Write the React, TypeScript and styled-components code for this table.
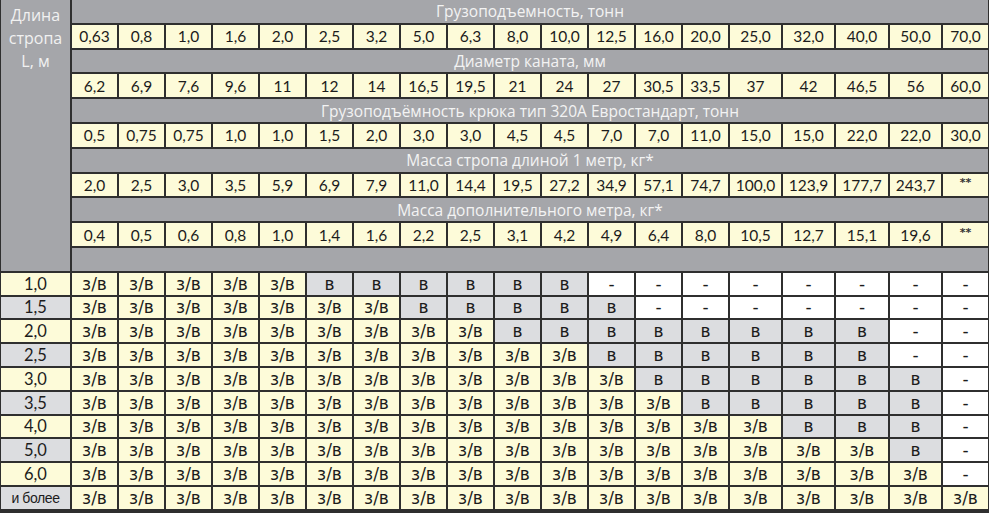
import styled, { createGlobalStyle } from "styled-components";

const GlobalStyle = createGlobalStyle`
  html, body {
    margin: 0;
    padding: 0;
    background: #2f2f2f;
  }
`;

type Tone = "yellow" | "gray" | "white";

const tones: Record<Tone, string> = {
  yellow: "#fdfbd9",
  gray: "#dcdde0",
  white: "#ffffff",
};

const Table = styled.div`
  width: 989px;
  height: 513px;
  box-sizing: border-box;
  display: grid;
  grid-template-columns: 69px repeat(14, 45px) 51px 51px 52px 51px 1fr;
  grid-template-rows: repeat(11, 22.8px) repeat(10, 21.8px);
  gap: 2px;
  padding: 0 1px 2px 1px;
  background: #2f2f2f;
`;

const LengthHeader = styled.div`
  grid-column: 1;
  grid-row: 1 / span 11;
  background: #a5a6aa;
  color: #f1f1f1;
  font-family: "Open Sans", "Liberation Sans", sans-serif;
  font-size: 16px;
  line-height: 23px;
  text-align: center;
  padding-top: 4px;
`;

const Band = styled.div`
  grid-column: 2 / -1;
  background: #a5a6aa;
  color: #f3f3f3;
  font-family: "Open Sans", "Liberation Sans", sans-serif;
  font-size: 15.5px;
  display: flex;
  align-items: center;
  justify-content: center;
`;

const Value = styled.div`
  background: ${tones.yellow};
  color: #1c1c1c;
  font-family: Lato, "Liberation Sans", sans-serif;
  font-size: 15.5px;
  display: flex;
  align-items: center;
  justify-content: center;
`;

const Stars = styled.span`
  font-family: "DejaVu Sans", sans-serif;
  font-size: 11px;
  font-weight: bold;
  color: #333;
  margin-top: -4px;
`;

const LengthCell = styled.div<{ $tone: Tone }>`
  background: ${(p) => tones[p.$tone]};
  color: #1c1c1c;
  font-family: Lato, "Liberation Sans", sans-serif;
  font-size: 16.5px;
  display: flex;
  align-items: center;
  justify-content: center;
`;

const MoreLabel = styled.span`
  font-family: "Liberation Sans Narrow", "Liberation Sans", sans-serif;
  font-size: 14px;
  letter-spacing: -0.4px;
`;

const Mark = styled.div<{ $tone: Tone }>`
  background: ${(p) => tones[p.$tone]};
  color: #1c1c1c;
  font-family: "DejaVu Sans", Verdana, sans-serif;
  font-size: 17px;
  display: flex;
  align-items: center;
  justify-content: center;
`;

const sections: { title: string; values: string[] }[] = [
  {
    title: "Грузоподъемность, тонн",
    values: ["0,63", "0,8", "1,0", "1,6", "2,0", "2,5", "3,2", "5,0", "6,3", "8,0", "10,0", "12,5", "16,0", "20,0", "25,0", "32,0", "40,0", "50,0", "70,0"],
  },
  {
    title: "Диаметр каната, мм",
    values: ["6,2", "6,9", "7,6", "9,6", "11", "12", "14", "16,5", "19,5", "21", "24", "27", "30,5", "33,5", "37", "42", "46,5", "56", "60,0"],
  },
  {
    title: "Грузоподъёмность крюка тип 320А Евростандарт, тонн",
    values: ["0,5", "0,75", "0,75", "1,0", "1,0", "1,5", "2,0", "3,0", "3,0", "4,5", "4,5", "7,0", "7,0", "11,0", "15,0", "15,0", "22,0", "22,0", "30,0"],
  },
  {
    title: "Масса стропа длиной 1 метр, кг*",
    values: ["2,0", "2,5", "3,0", "3,5", "5,9", "6,9", "7,9", "11,0", "14,4", "19,5", "27,2", "34,9", "57,1", "74,7", "100,0", "123,9", "177,7", "243,7", "**"],
  },
  {
    title: "Масса дополнительного метра, кг*",
    values: ["0,4", "0,5", "0,6", "0,8", "1,0", "1,4", "1,6", "2,2", "2,5", "3,1", "4,2", "4,9", "6,4", "8,0", "10,5", "12,7", "15,1", "19,6", "**"],
  },
];

// [length, count of "з/в", count of "в", count of "-"]
const lengths: [string, number, number, number][] = [
  ["1,0", 5, 6, 8],
  ["1,5", 7, 5, 7],
  ["2,0", 9, 8, 2],
  ["2,5", 11, 6, 2],
  ["3,0", 12, 6, 1],
  ["3,5", 13, 5, 1],
  ["4,0", 15, 3, 1],
  ["5,0", 17, 1, 1],
  ["6,0", 18, 0, 1],
  ["и более", 19, 0, 0],
];

const markCells = (zv: number, v: number, dash: number) => [
  ...Array(zv).fill({ text: "з/в", tone: "yellow" as Tone }),
  ...Array(v).fill({ text: "в", tone: "gray" as Tone }),
  ...Array(dash).fill({ text: "-", tone: "white" as Tone }),
];

const App = () => {
  return (
    <>
      <GlobalStyle />
      <Table>
        <LengthHeader>
          Длина
          <br />
          стропа
          <br />
          L, м
        </LengthHeader>
        {sections.map((s) => (
          <>
            <Band key={s.title}>{s.title}</Band>
            {s.values.map((v, i) => (
              <Value key={s.title + i}>{v === "**" ? <Stars>**</Stars> : v}</Value>
            ))}
          </>
        ))}
        <Band />
        {lengths.map(([len, zv, v, dash], r) => (
          <>
            <LengthCell key={len} $tone={r % 2 === 0 ? "yellow" : "gray"}>
              {len === "и более" ? <MoreLabel>{len}</MoreLabel> : len}
            </LengthCell>
            {markCells(zv, v, dash).map((c, i) => (
              <Mark key={len + i} $tone={c.tone}>
                {c.text}
              </Mark>
            ))}
          </>
        ))}
      </Table>
    </>
  );
};

export default App;
